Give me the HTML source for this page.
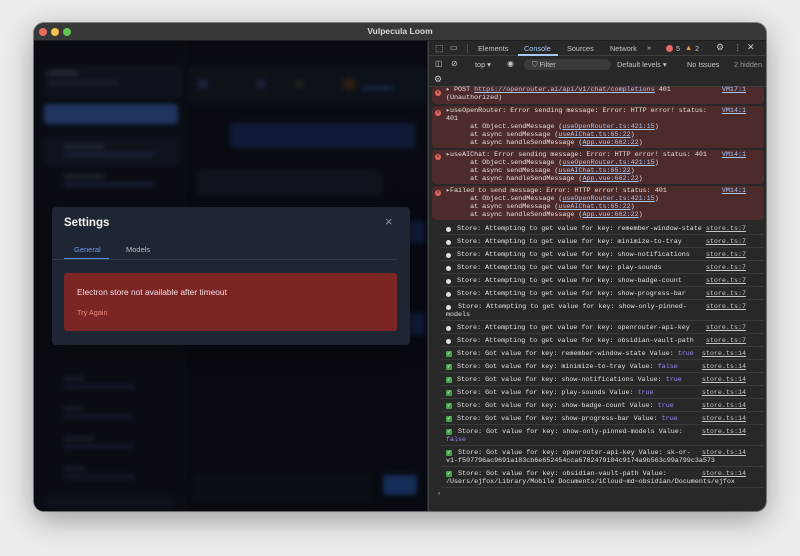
<!DOCTYPE html>
<html><head><meta charset="utf-8"><style>
*{margin:0;padding:0;box-sizing:border-box}
body{width:800px;height:556px;background:#ececec;position:relative;overflow:hidden;font-family:"Liberation Sans",sans-serif}
.win{position:absolute;left:34px;top:23px;width:732px;height:488px;border-radius:10px;overflow:hidden;background:#282828;box-shadow:0 8px 30px rgba(0,0,0,.35),0 0 0 1px rgba(0,0,0,.4)}
.title{position:absolute;left:0;top:0;width:732px;height:18px;background:#383838;border-bottom:1px solid #1e1e1e}
.title .t{position:absolute;left:0;right:0;top:3px;text-align:center;font-size:8.5px;font-weight:bold;color:#d8d8d8}
.dot{position:absolute;top:5px;width:8px;height:8px;border-radius:50%}
.app{position:absolute;left:0;top:18px;width:393px;height:470px;background:#0a0e15;overflow:hidden}
.blur{position:absolute;filter:blur(2.5px)}
.a{position:absolute}
.dt{position:absolute;left:394px;top:18px;width:338px;height:470px;background:#282828;border-left:1px solid #3d3d3d}
.tb{position:absolute;font-size:7.3px;color:#c6c6c6;white-space:nowrap}
.m{position:absolute;font-family:"Liberation Mono",monospace;font-size:6.7px;line-height:8px;white-space:pre;color:#e3e3e3}
.err{position:absolute;left:3px;width:332px;background:#4d2b2b;border-radius:4px}
.lnk{color:#a8c7fa;text-decoration:underline}
.sl{position:absolute;right:20px;font-family:"Liberation Mono",monospace;font-size:6.7px;line-height:8px;color:#c7c7c7;text-decoration:underline}
.row{position:absolute;left:12px;width:323px;border-bottom:1px solid #3a3a3a}
.v{color:#9d87ff}
.ei{position:absolute;left:6px;width:6px;height:6px;border-radius:50%;background:#e46962;color:#4d2b2b;font-size:5px;line-height:6px;text-align:center;font-weight:bold}
.ii{position:absolute;left:17px;width:5px;height:5px;border-radius:50%;background:#e0e0e0}
.ok{position:absolute;left:17px;width:6px;height:6px;border-radius:1px;background:#43a047;color:#fff;font-size:5.5px;line-height:6px;text-align:center}
</style></head><body>
<div class="win">
 <div class="title">
  <div class="dot" style="left:5px;background:#ed6a5e"></div>
  <div class="dot" style="left:17px;background:#f5bf4f"></div>
  <div class="dot" style="left:29px;background:#61c554"></div>
  <div class="t">Vulpecula Loom</div>
 </div>
 <div class="app">
  <div class="blur" style="left:0;top:0;width:393px;height:470px">
   <div class="a" style="left:0;top:0;width:150px;height:470px;background:#0c1018;border-right:1px solid #151a24"></div>
   <div class="a" style="left:10px;top:25px;width:138px;height:32px;background:#141923;border-radius:3px"></div>
   <div class="a" style="left:14px;top:30px;width:30px;height:4px;background:#3a4050"></div>
   <div class="a" style="left:14px;top:40px;width:70px;height:3px;background:#2a3040"></div>
   <div class="a" style="left:10px;top:63px;width:134px;height:20px;background:#2b4a86;border-radius:4px"></div>
   <div class="a" style="left:10px;top:96px;width:134px;height:28px;background:#151a25;border-radius:3px"></div>
   <div class="a" style="left:30px;top:104px;width:40px;height:3px;background:#3a4050"></div>
   <div class="a" style="left:30px;top:112px;width:90px;height:3px;background:#2a3560"></div>
   <div class="a" style="left:30px;top:134px;width:40px;height:3px;background:#3a4050"></div>
   <div class="a" style="left:30px;top:142px;width:90px;height:3px;background:#2a3560"></div>
   <div class="a" style="left:30px;top:336px;width:20px;height:3px;background:#2a3040"></div><div class="a" style="left:30px;top:344px;width:70px;height:3px;background:#22284a"></div>
   <div class="a" style="left:30px;top:366px;width:20px;height:3px;background:#2a3040"></div><div class="a" style="left:30px;top:374px;width:70px;height:3px;background:#22284a"></div>
   <div class="a" style="left:30px;top:396px;width:30px;height:3px;background:#2a3040"></div><div class="a" style="left:30px;top:404px;width:70px;height:3px;background:#22284a"></div>
   <div class="a" style="left:30px;top:426px;width:20px;height:3px;background:#2a3040"></div><div class="a" style="left:30px;top:434px;width:70px;height:3px;background:#22284a"></div>
   <div class="a" style="left:10px;top:455px;width:130px;height:12px;background:#121620;border-radius:3px"></div>
   <div class="a" style="left:154px;top:26px;width:239px;height:36px;background:#121720"></div>
   <div class="a" style="left:164px;top:38px;width:10px;height:10px;border-radius:50%;background:#25305a"></div>
   <div class="a" style="left:222px;top:38px;width:10px;height:10px;border-radius:50%;background:#2a2a50"></div>
   <div class="a" style="left:260px;top:38px;width:10px;height:10px;border-radius:50%;background:#282a22"></div>
   <div class="a" style="left:308px;top:36px;width:14px;height:14px;border-radius:50%;background:#3a2418"></div>
   <div class="a" style="left:328px;top:45px;width:30px;height:4px;background:#24356a"></div>
   <div class="a" style="left:196px;top:82px;width:185px;height:25px;background:#17254d;border-radius:3px"></div>
   <div class="a" style="left:163px;top:129px;width:185px;height:27px;background:#151a24;border-radius:3px"></div>
   <div class="a" style="left:350px;top:180px;width:40px;height:22px;background:#17254d"></div>
   <div class="a" style="left:350px;top:272px;width:40px;height:22px;background:#17254d"></div>
   <div class="a" style="left:158px;top:432px;width:180px;height:30px;background:#0e121a;border-radius:3px"></div>
   <div class="a" style="left:349px;top:434px;width:34px;height:20px;background:#1e3e7a;border-radius:4px"></div>
  </div>
  <div class="a" style="left:0;top:0;width:393px;height:470px;background:rgba(4,6,10,.3)"></div>
  <div class="a" style="left:18px;top:166px;width:358px;height:138px;background:#1f2633;border-radius:4px;box-shadow:0 4px 16px rgba(0,0,0,.5)">
   <div class="a" style="left:12px;top:10px;font-size:11.5px;font-weight:bold;color:#f2f2f2">Settings</div>
   <div class="a" style="left:333px;top:7px;font-size:13px;color:#8a909a">×</div>
   <div class="a" style="left:22px;top:38px;font-size:7.5px;color:#6a96f0">General</div>
   <div class="a" style="left:12px;top:51px;width:45px;height:1px;background:#5b8def"></div>
   <div class="a" style="left:74px;top:38px;font-size:7.5px;color:#b8bcc4">Models</div>
   <div class="a" style="left:0;top:52px;width:345px;height:1px;background:#343b48"></div>
   <div class="a" style="left:12px;top:66px;width:333px;height:58px;background:#7b2524;border-radius:3px">
    <div class="a" style="left:13px;top:14px;font-size:8.4px;color:#f1dede">Electron store not available after timeout</div>
    <div class="a" style="left:13px;top:35px;font-size:7.3px;color:#e88b80">Try Again</div>
   </div>
  </div>
 </div>
 <div class="dt">
  <div class="a" style="left:0;top:0;width:338px;height:15px;border-bottom:1px solid #3d3d3d"></div>
  <div class="tb" style="left:6px;top:2px;font-size:9px">⬚</div>
  <div class="tb" style="left:21px;top:2px;font-size:8px">▭</div>
  <div class="a" style="left:38px;top:3px;width:1px;height:9px;background:#4a4a4a"></div>
  <div class="tb" style="left:49px;top:3px">Elements</div>
  <div class="tb" style="left:95px;top:3px;color:#a8c7fa">Console</div>
  <div class="a" style="left:89px;top:13px;width:40px;height:2px;background:#a8c7fa"></div>
  <div class="tb" style="left:138px;top:3px">Sources</div>
  <div class="tb" style="left:181px;top:3px">Network</div>
  <div class="tb" style="left:218px;top:2px">»</div>
  <div class="a" style="left:237px;top:4px;width:7px;height:7px;border-radius:50%;background:#e46962"></div>
  <div class="tb" style="left:247px;top:3px">5</div>
  <div class="tb" style="left:256px;top:2px;color:#f29b4b">▲</div>
  <div class="tb" style="left:266px;top:3px">2</div>
  <div class="tb" style="left:287px;top:1px;font-size:9px">⚙</div>
  <div class="tb" style="left:305px;top:2px">⋮</div>
  <div class="tb" style="left:318px;top:1px;font-size:9px">✕</div>
  <div class="a" style="left:0;top:16px;width:338px;height:30px;border-bottom:1px solid #3d3d3d"></div>
  <div class="tb" style="left:6px;top:18px;font-size:8px">◫</div>
  <div class="tb" style="left:22px;top:18px;font-size:8px">⊘</div>
  <div class="tb" style="left:46px;top:19px">top ▾</div>
  <div class="tb" style="left:78px;top:18px;font-size:8px">◉</div>
  <div class="a" style="left:95px;top:18px;width:87px;height:11px;border-radius:6px;background:#3a3a3a"></div>
  <div class="tb" style="left:103px;top:19px">⛉ Filter</div>
  <div class="tb" style="left:188px;top:19px">Default levels ▾</div>
  <div class="tb" style="left:258px;top:19px">No Issues</div>
  <div class="tb" style="left:305px;top:19px;color:#9a9a9a">2 hidden</div>
  <div class="tb" style="left:5px;top:33px;font-size:9px">⚙</div>

  <div class="err" style="top:46px;height:17px"></div>
  <div class="ei" style="top:49px">×</div>
  <div class="m" style="left:17px;top:45px">▸ POST <span class="lnk">https://openrouter.ai/api/v1/chat/completions</span> 401
(Unauthorized)</div>
  <div class="sl" style="top:45px;color:#a8c7fa">VM17:1</div>

  <div class="err" style="top:65px;height:42px"></div>
  <div class="ei" style="top:69px">×</div>
  <div class="m" style="left:17px;top:66px">▸useOpenRouter: Error sending message: Error: HTTP error! status:
401
      at Object.sendMessage (<span class="lnk">useOpenRouter.ts:421:15</span>)
      at async sendMessage (<span class="lnk">useAIChat.ts:65:22</span>)
      at async handleSendMessage (<span class="lnk">App.vue:662:22</span>)</div>
  <div class="sl" style="top:66px;color:#a8c7fa">VM14:1</div>

  <div class="err" style="top:109px;height:34px"></div>
  <div class="ei" style="top:113px">×</div>
  <div class="m" style="left:17px;top:110px">▸useAIChat: Error sending message: Error: HTTP error! status: 401
      at Object.sendMessage (<span class="lnk">useOpenRouter.ts:421:15</span>)
      at async sendMessage (<span class="lnk">useAIChat.ts:65:22</span>)
      at async handleSendMessage (<span class="lnk">App.vue:662:22</span>)</div>
  <div class="sl" style="top:110px;color:#a8c7fa">VM14:1</div>

  <div class="err" style="top:145px;height:34px"></div>
  <div class="ei" style="top:149px">×</div>
  <div class="m" style="left:17px;top:146px">▸Failed to send message: Error: HTTP error! status: 401
      at Object.sendMessage (<span class="lnk">useOpenRouter.ts:421:15</span>)
      at async sendMessage (<span class="lnk">useAIChat.ts:65:22</span>)
      at async handleSendMessage (<span class="lnk">App.vue:662:22</span>)</div>
  <div class="sl" style="top:146px;color:#a8c7fa">VM14:1</div>

  <div class="row" style="top:181px;height:13px"></div><div class="ii" style="top:186px"></div><div class="m" style="left:28px;top:184px">Store: Attempting to get value for key: remember-window-state</div><div class="sl" style="top:184px">store.ts:7</div>
  <div class="row" style="top:194px;height:13px"></div><div class="ii" style="top:199px"></div><div class="m" style="left:28px;top:197px">Store: Attempting to get value for key: minimize-to-tray</div><div class="sl" style="top:197px">store.ts:7</div>
  <div class="row" style="top:207px;height:13px"></div><div class="ii" style="top:212px"></div><div class="m" style="left:28px;top:210px">Store: Attempting to get value for key: show-notifications</div><div class="sl" style="top:210px">store.ts:7</div>
  <div class="row" style="top:220px;height:13px"></div><div class="ii" style="top:225px"></div><div class="m" style="left:28px;top:223px">Store: Attempting to get value for key: play-sounds</div><div class="sl" style="top:223px">store.ts:7</div>
  <div class="row" style="top:233px;height:13px"></div><div class="ii" style="top:238px"></div><div class="m" style="left:28px;top:236px">Store: Attempting to get value for key: show-badge-count</div><div class="sl" style="top:236px">store.ts:7</div>
  <div class="row" style="top:246px;height:13px"></div><div class="ii" style="top:251px"></div><div class="m" style="left:28px;top:249px">Store: Attempting to get value for key: show-progress-bar</div><div class="sl" style="top:249px">store.ts:7</div>
  <div class="row" style="top:259px;height:21px"></div><div class="ii" style="top:264px"></div><div class="m" style="left:17px;top:262px">   Store: Attempting to get value for key: show-only-pinned-
models</div><div class="sl" style="top:262px">store.ts:7</div>
  <div class="row" style="top:280px;height:13px"></div><div class="ii" style="top:285px"></div><div class="m" style="left:28px;top:283px">Store: Attempting to get value for key: openrouter-api-key</div><div class="sl" style="top:283px">store.ts:7</div>
  <div class="row" style="top:293px;height:13px"></div><div class="ii" style="top:298px"></div><div class="m" style="left:28px;top:296px">Store: Attempting to get value for key: obsidian-vault-path</div><div class="sl" style="top:296px">store.ts:7</div>
  <div class="row" style="top:306px;height:13px"></div><div class="ok" style="top:310px">✓</div><div class="m" style="left:28px;top:309px">Store: Got value for key: remember-window-state Value: <span class="v">true</span></div><div class="sl" style="top:309px">store.ts:14</div>
  <div class="row" style="top:319px;height:13px"></div><div class="ok" style="top:323px">✓</div><div class="m" style="left:28px;top:322px">Store: Got value for key: minimize-to-tray Value: <span class="v">false</span></div><div class="sl" style="top:322px">store.ts:14</div>
  <div class="row" style="top:332px;height:13px"></div><div class="ok" style="top:336px">✓</div><div class="m" style="left:28px;top:335px">Store: Got value for key: show-notifications Value: <span class="v">true</span></div><div class="sl" style="top:335px">store.ts:14</div>
  <div class="row" style="top:345px;height:13px"></div><div class="ok" style="top:349px">✓</div><div class="m" style="left:28px;top:348px">Store: Got value for key: play-sounds Value: <span class="v">true</span></div><div class="sl" style="top:348px">store.ts:14</div>
  <div class="row" style="top:358px;height:13px"></div><div class="ok" style="top:362px">✓</div><div class="m" style="left:28px;top:361px">Store: Got value for key: show-badge-count Value: <span class="v">true</span></div><div class="sl" style="top:361px">store.ts:14</div>
  <div class="row" style="top:371px;height:13px"></div><div class="ok" style="top:375px">✓</div><div class="m" style="left:28px;top:374px">Store: Got value for key: show-progress-bar Value: <span class="v">true</span></div><div class="sl" style="top:374px">store.ts:14</div>
  <div class="row" style="top:384px;height:21px"></div><div class="ok" style="top:388px">✓</div><div class="m" style="left:17px;top:387px">   Store: Got value for key: show-only-pinned-models Value:
<span class="v">false</span></div><div class="sl" style="top:387px">store.ts:14</div>
  <div class="row" style="top:405px;height:21px"></div><div class="ok" style="top:409px">✓</div><div class="m" style="left:17px;top:408px">   Store: Got value for key: openrouter-api-key Value: sk-or-
v1-f507796ac9691a183cb6e652454cca6782479104c9174a9b563c99a799c3a573</div><div class="sl" style="top:408px">store.ts:14</div>
  <div class="row" style="top:426px;height:21px"></div><div class="ok" style="top:430px">✓</div><div class="m" style="left:17px;top:429px">   Store: Got value for key: obsidian-vault-path Value:
/Users/ejfox/Library/Mobile Documents/iCloud~md~obsidian/Documents/ejfox</div><div class="sl" style="top:429px">store.ts:14</div>
  <div class="m" style="left:8px;top:449px;color:#a8c7fa">›</div>
 </div>
</div>
</body></html>
